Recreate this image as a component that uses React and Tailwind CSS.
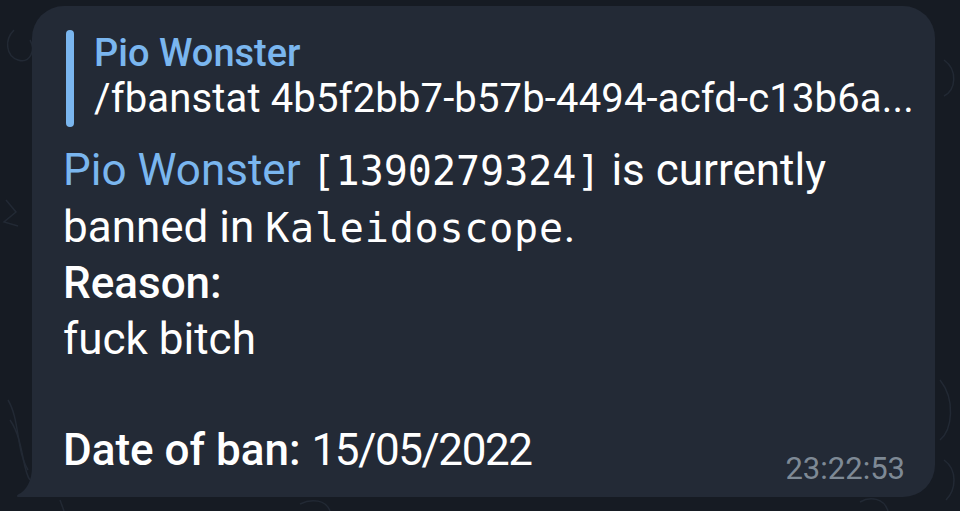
import React from 'react'

const mono = { fontFamily: '"DejaVu Sans Mono", "Liberation Mono", monospace' }

// Chat bubble tail at the bottom-left corner
const Tail = () => (
  <svg className="absolute left-[-16px] bottom-0" width="17" height="30" viewBox="0 0 17 30">
    <path d="M17 0 L16 0 C16 14 10 24 2 27.5 Q0 28.6 1.5 30 L17 30 Z" fill="#232a36" />
  </svg>
)

const Doodles = () => (
  <svg className="absolute inset-0" width="960" height="511" viewBox="0 0 960 511" fill="none" stroke="#222934" strokeWidth="1.5">
    <path d="M14 30 C4 40 6 56 18 60 C30 64 36 50 30 40" />
    <path d="M6 200 L16 212 L4 222 L18 226" />
    <path d="M8 400 C20 420 16 450 28 470" />
    <path d="M10 420 C24 440 22 470 30 480" />
    <path d="M944 60 C958 70 956 90 944 96" />
    <path d="M940 380 C956 400 952 430 940 440" />
    <path d="M944 460 C958 470 956 490 946 500" />
    <path d="M300 504 C312 498 326 500 330 511" />
    <path d="M60 500 L64 511" />
    <path d="M860 502 C870 496 884 498 888 511" />
  </svg>
)

export default function App() {
  return (
    <div className="relative w-[960px] h-[511px] overflow-hidden bg-[#161b23] pt-[6px] pl-[32px]" style={{ fontFamily: 'Roboto, "Noto Sans", sans-serif' }}>
      <Doodles />
      <div className="relative w-[903px] h-[491px] rounded-[32px] rounded-bl-none bg-[#232a36] pl-[31px] pt-[24px]">
        <Tail />

        {/* Reply preview */}
        <div className="flex pl-[3px]">
          <div className="w-[8px] h-[97px] rounded-full bg-[#7ab6ef]" />
          <div className="pl-[20px] pt-[1px] leading-[45px] whitespace-nowrap">
            <div className="text-[38px] font-medium text-[#7ab6ef]">Pio Wonster</div>
            <div className="text-[40px] tracking-[0.15px] text-white">/fbanstat 4b5f2bb7-b57b-4494-acfd-c13b6a...</div>
          </div>
        </div>

        {/* Message body */}
        <div className="mt-[16px] text-[44px] leading-[55.5px] text-white">
          <div className="whitespace-nowrap">
            <span className="text-[#7ab6ef]">Pio Wonster</span>{' '}
            <span className="text-[40px]" style={mono}>[1390279324]</span> is currently
          </div>
          <div className="whitespace-nowrap">
            banned in <span className="text-[40px] tracking-[0.8px]" style={mono}>Kaleidoscope</span>.
          </div>
          <div className="font-medium">Reason:</div>
          <div>fuck bitch</div>
          <div className="h-[55.5px]" />
          <div className="flex items-end justify-between pr-[30px]">
            <div>
              <span className="font-medium">Date of ban:</span>{' '}
              <span className="tracking-[-1.4px]">15/05/2022</span>
            </div>
            <div className="mb-[-9px] text-[31px] leading-[36px] text-[#7e8995]">23:22:53</div>
          </div>
        </div>
      </div>
    </div>
  )
}
